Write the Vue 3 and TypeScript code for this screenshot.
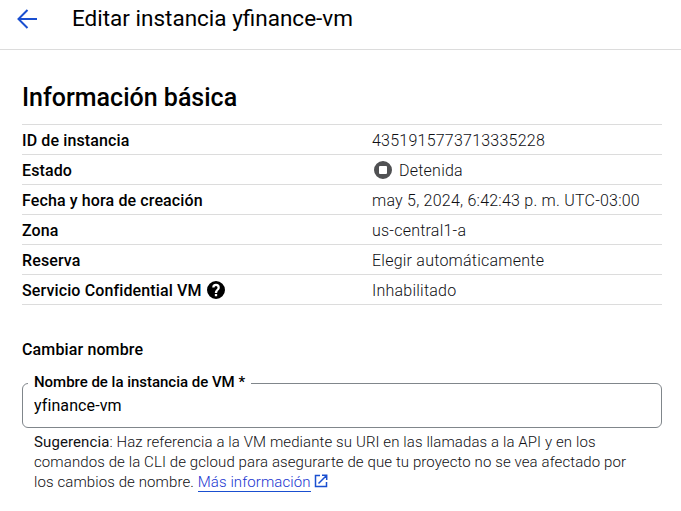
<script setup lang="ts">
import { ref } from 'vue'

interface InfoRow {
  label: string
  value: string
  key: string
}

const instanceName = ref<string>('yfinance-vm')

const rows: InfoRow[] = [
  { key: 'id', label: 'ID de instancia', value: '4351915773713335228' },
  { key: 'status', label: 'Estado', value: 'Detenida' },
  { key: 'created', label: 'Fecha y hora de creación', value: 'may 5, 2024, 6:42:43 p. m. UTC-03:00' },
  { key: 'zone', label: 'Zona', value: 'us-central1-a' },
  { key: 'reservation', label: 'Reserva', value: 'Elegir automáticamente' },
  { key: 'confidential', label: 'Servicio Confidential VM', value: 'Inhabilitado' },
]
</script>

<template>
  <div class="page">
    <header class="topbar">
      <svg class="back" viewBox="0 0 20 20" fill="none" stroke="#1a4fd0" stroke-width="2">
        <path d="M10.500 1 1.500 10 10.500 19M1.500 10H20" />
      </svg>
      <h1 class="title">Editar instancia {{ instanceName }}</h1>
    </header>

    <main class="content">
      <h2 class="section-title">Información básica</h2>
      <dl class="info">
        <div v-for="row in rows" :key="row.key" class="row">
          <dt>
            <span class="text">{{ row.label }}</span>
            <svg v-if="row.key === 'confidential'" class="help" viewBox="2 2 20 20">
              <path fill="#000" d="M12 2a10 10 0 1 0 0 20 10 10 0 0 0 0-20zm1.3 17h-2.6v-2.6h2.6V19zm2.4-7.7-.9.9c-.9.9-1.5 1.6-1.5 3.1h-2.6v-.6c0-1.1.5-2.1 1.2-2.8l1.3-1.3c.3-.3.5-.8.5-1.3a1.7 1.7 0 0 0-3.4 0H7.8a4.2 4.2 0 0 1 8.4 0c0 .8-.2 1.4-.5 2z" />
            </svg>
          </dt>
          <dd>
            <svg v-if="row.key === 'status'" class="stopped" viewBox="0 0 18 18">
              <path fill="#505153" fill-rule="evenodd" d="M9 0a9 9 0 1 0 0 18A9 9 0 0 0 9 0zM6 5h6A1 1 0 0 1 13 6v6a1 1 0 0 1-1 1H6A1 1 0 0 1 5 12V6A1 1 0 0 1 6 5z" />
            </svg>
            <span class="text">{{ row.value }}</span>
          </dd>
        </div>
      </dl>

      <h3 class="subtitle">Cambiar nombre</h3>
      <fieldset class="field">
        <legend>Nombre de la instancia de VM *</legend>
        <input v-model="instanceName" type="text" spellcheck="false" />
      </fieldset>
      <p class="hint">
        <span class="line"><b>Sugerencia</b>: Haz referencia a la VM mediante su URI en las llamadas a la API y en los</span>
        <span class="line">comandos de la CLI de gcloud para asegurarte de que tu proyecto no se vea afectado por</span>
        <span class="line">los cambios de nombre. <a class="link" href="#">Más información</a><svg class="external" viewBox="0 0 14 14" fill="none" stroke="#1a4fd0" stroke-width="1.5"><path d="M6 1.500H1.500V12.500H12.500V8M8 1.200H12.700V6M12.500 1.500 4.500 9.500" /></svg></span>
      </p>
    </main>
  </div>
</template>

<style>
body {
  background: #fff;
}
</style>

<style scoped>
.page {
  height: 511px;
  overflow: hidden;
  font-family: Roboto, "Liberation Sans", sans-serif;
  font-size: 16px;
  color: #000;
}
.topbar {
  display: flex;
  align-items: center;
  box-sizing: border-box;
  height: 50px;
  padding: 0 0 13px 17px;
  border-bottom: 1px solid #dcdcdc;
}
.back {
  width: 20px;
  height: 20px;
  margin: 1px 35px 0 0;
}
.title {
  margin: 0;
  font-size: 22.5px;
  font-weight: 400;
  line-height: 30px;
  white-space: nowrap;
}
.content {
  padding: 32px 19px 0 22px;
}
.section-title {
  margin: 0 0 11px;
  font-size: 25px;
  font-weight: 500;
  line-height: 31px;
}
.info {
  margin: 0;
  border-top: 1px solid #dcdcdc;
}
.row {
  display: flex;
  box-sizing: border-box;
  height: 30px;
  padding-top: 1px;
  border-bottom: 1px solid #dcdcdc;
  line-height: 28px;
}
.text {
  padding-top: 2px;
}
dt {
  display: flex;
  align-items: center;
  width: 350px;
  font-weight: 500;
  letter-spacing: 0.12px;
}
dd {
  display: flex;
  align-items: center;
  margin: 0;
  font-weight: 300;
  color: #101014;
  letter-spacing: 0.23px;
}
.help {
  width: 18px;
  height: 18px;
  margin-left: 5px;
}
.stopped {
  width: 18px;
  height: 18px;
  margin: 0 7px 0 2px;
}
.subtitle {
  margin: 35px 0 22px;
  font-size: 16px;
  font-weight: 500;
  line-height: 20px;
  letter-spacing: 0.13px;
}
.field {
  box-sizing: border-box;
  height: 55px;
  min-width: 0;
  margin: -9px 0 0;
  padding: 0 11px;
  border: 1px solid #80868b;
  border-radius: 6px;
}
legend {
  box-sizing: border-box;
  height: 20px;
  margin-left: -6px;
  padding: 0 6px;
  font-size: 15px;
  font-weight: 500;
  line-height: 18px;
  letter-spacing: -0.02px;
}
.field input {
  display: block;
  width: 100%;
  height: 24px;
  margin-top: 1px;
  padding: 0;
  border: 0;
  outline: 0;
  background: none;
  color: #000;
  font: 400 16px/24px Roboto, sans-serif;
  letter-spacing: 0.1px;
}
.hint {
  margin: 4px 0 0 12px;
  font-size: 15px;
  font-weight: 300;
  line-height: 20px;
  color: #101014;
  letter-spacing: 0.1px;
}
.hint b {
  font-weight: 400;
}
.line {
  display: block;
  height: 20px;
  white-space: nowrap;
}
.link {
  border-bottom: 1px solid #1a4fd0;
  color: #1a35d0;
  text-decoration: none;
}
.external {
  width: 14px;
  height: 14px;
  margin-left: 3px;
  vertical-align: -1px;
}
</style>
